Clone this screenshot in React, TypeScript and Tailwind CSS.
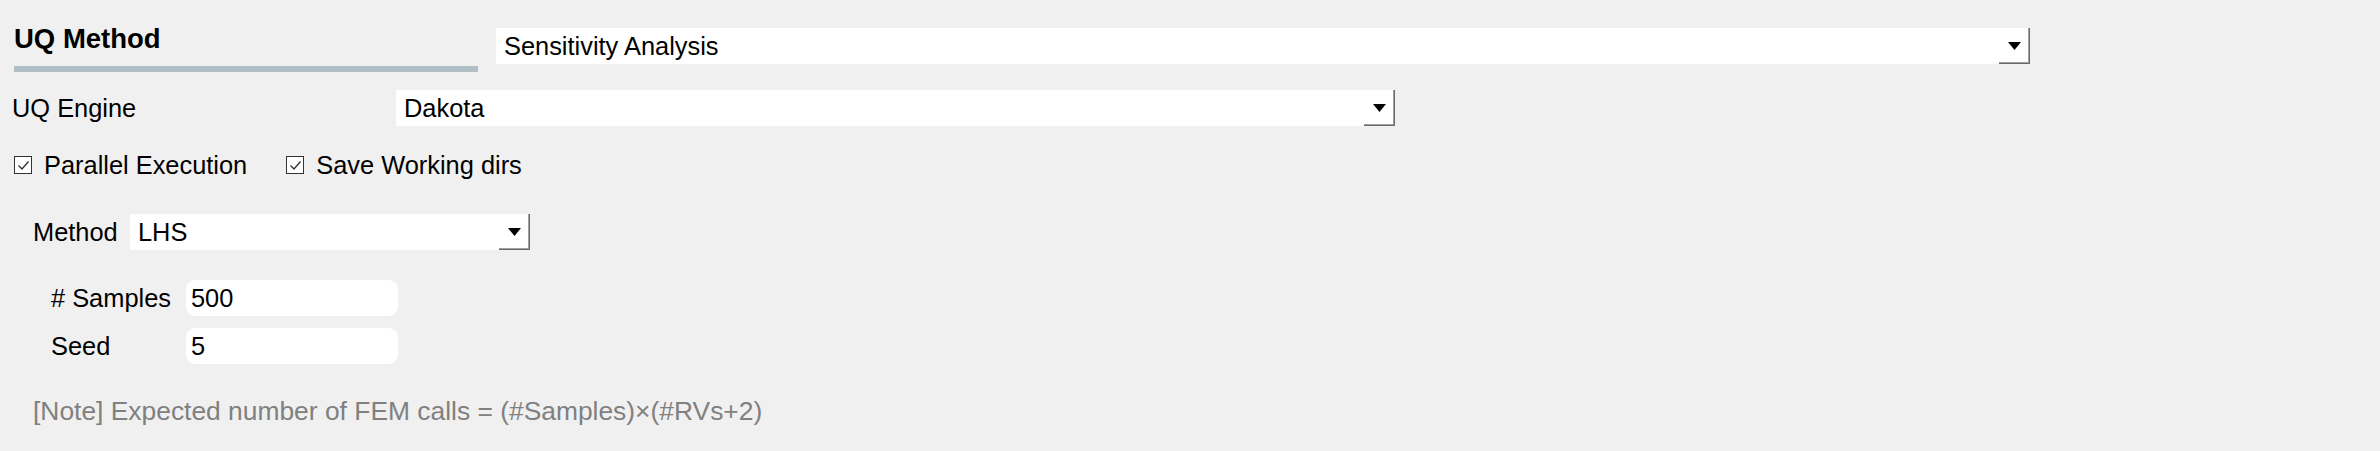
import React from "react";

function Arrow() {
  return (
    <svg width="13" height="8" viewBox="0 0 13 8" className="block">
      <polygon points="0,0 13,0 6.5,8" fill="#000" />
    </svg>
  );
}

function Combo({ value, width, textPad = 8 }: { value: string; width: string; textPad?: number }) {
  return (
    <div className={`flex h-[36px] items-center bg-white ${width}`}>
      <div className="flex-1 truncate" style={{ paddingLeft: textPad }}>
        {value}
      </div>
      <div className="flex h-full w-[31px] items-center justify-center shadow-[inset_-1px_-1px_0_#696969,inset_-2px_-2px_0_#a0a0a0]">
        <Arrow />
      </div>
    </div>
  );
}

function Check({ label }: { label: string }) {
  return (
    <div className="flex items-center">
      <div className="flex h-[18px] w-[18px] items-center justify-center border border-[#333] bg-white">
        <svg width="13" height="11" viewBox="0 0 13 11">
          <polyline points="1.5,5.5 5,9 11.5,1.5" fill="none" stroke="#333" strokeWidth="1.4" />
        </svg>
      </div>
      <span className="ml-[12px]">{label}</span>
    </div>
  );
}

function NumField({ label, value }: { label: string; value: string }) {
  return (
    <div className="flex h-[36px] items-center">
      <div className="w-[135px]">{label}</div>
      <div className="flex h-full w-[212px] items-center rounded-[9px] bg-white pl-[5px]">{value}</div>
    </div>
  );
}

export default function App() {
  return (
    <div className="h-[451px] w-[2380px] overflow-hidden bg-[#f0f0f0] text-[25.4px] leading-[30px] text-black [font-family:'Liberation_Sans',Arial,sans-serif]">
      {/* header */}
      <div className="flex items-start pl-[14px] pt-[24px]">
        <div className="flex w-[464px] flex-col">
          <div className="text-[27.5px] font-bold leading-[30px]">UQ Method</div>
          <div className="mt-[12px] h-[6px] bg-[#b0bec5]" />
        </div>
        <div className="ml-[18px] mt-[4px]">
          <Combo value="Sensitivity Analysis" width="w-[1534px]" />
        </div>
      </div>

      {/* engine */}
      <div className="mt-[18px] flex items-center pl-[12px]">
        <div className="w-[384px]">UQ Engine</div>
        <Combo value="Dakota" width="w-[999px]" />
      </div>

      <div className="mt-[25px] flex h-[28px] items-center gap-[39px] pl-[14px]">
        <Check label="Parallel Execution" />
        <Check label="Save Working dirs" />
      </div>

      <div className="mt-[35px] flex items-center pl-[33px]">
        <div className="w-[97px]">Method</div>
        <Combo value="LHS" width="w-[400px]" />
      </div>

      <div className="mt-[30px] flex flex-col gap-[12px] pl-[51px]">
        <NumField label="# Samples" value="500" />
        <NumField label="Seed" value="5" />
      </div>

      <div className="mt-[32px] pl-[33px] text-[26.4px] text-[#808080]">
        [Note] Expected number of FEM calls = (#Samples)×(#RVs+2)
      </div>
    </div>
  );
}
